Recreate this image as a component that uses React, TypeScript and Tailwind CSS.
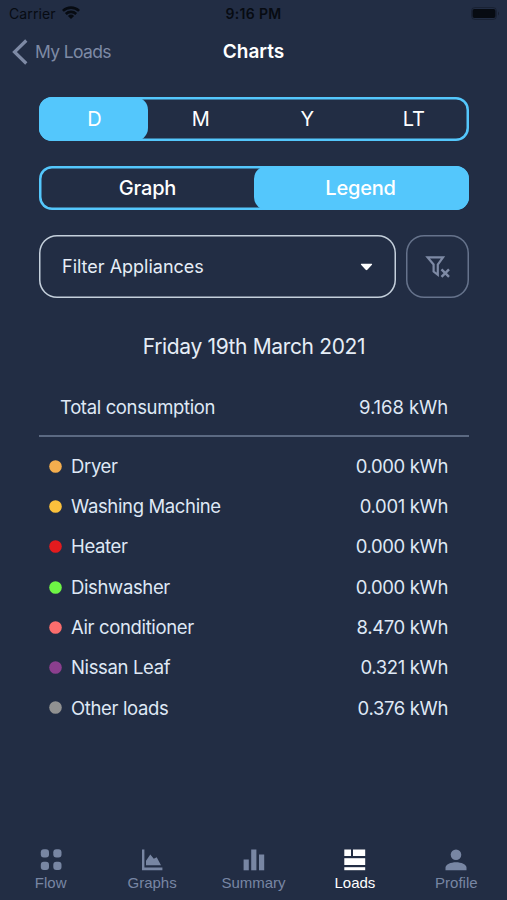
import type { ReactNode } from "react";
import clsx from "clsx";

interface Load {
  name: string;
  kwh: number;
  dot: string;
}

interface Tab {
  label: string;
  icon: ReactNode;
}

const loads: Load[] = [
  { name: "Dryer", kwh: 0, dot: "text-[#f4ae4e]" },
  { name: "Washing Machine", kwh: 0.001, dot: "text-[#fbc13c]" },
  { name: "Heater", kwh: 0, dot: "text-[#e31b1e]" },
  { name: "Dishwasher", kwh: 0, dot: "text-[#6ef545]" },
  { name: "Air conditioner", kwh: 8.47, dot: "text-[#fb6d6d]" },
  { name: "Nissan Leaf", kwh: 0.321, dot: "text-[#8b3f8e]" },
  { name: "Other loads", kwh: 0.376, dot: "text-[#919191]" },
];

const tabs: Tab[] = [
  {
    label: "Flow",
    icon: (
      <>
        <rect x="0.8" y="0.3" width="8.2" height="8.2" rx="3" />
        <rect x="13.3" y="0.3" width="8.2" height="8.2" rx="3" />
        <rect x="0.8" y="12.8" width="8.2" height="8.2" rx="3" />
        <rect x="13.3" y="12.8" width="8.2" height="8.2" rx="3" />
      </>
    ),
  },
  {
    label: "Graphs",
    icon: (
      <>
        <path d="M1 0.5h2.4v17.9H21.4v2.8H1z" />
        <path d="M5 16.2V11.8L9.3 5.6l3.5 4.2L15.7 8.2l4.3 8z" />
      </>
    ),
  },
  {
    label: "Summary",
    icon: (
      <>
        <rect x="0.6" y="10.5" width="5.2" height="10.8" />
        <rect x="8.2" y="0.5" width="5.2" height="20.8" />
        <rect x="16" y="5.5" width="5.2" height="15.8" />
      </>
    ),
  },
  {
    label: "Loads",
    icon: (
      <>
        <rect x="0.3" y="0.5" width="6.7" height="6.5" />
        <rect x="9" y="0.5" width="12.2" height="6.5" />
        <rect x="0.3" y="9.2" width="20.9" height="6.8" />
        <rect x="0.3" y="18.2" width="20.9" height="3" />
      </>
    ),
  },
  {
    label: "Profile",
    icon: (
      <>
        <circle cx="11" cy="5.7" r="5.3" />
        <path d="M0.5 21.2v-2.4c0-3.3 5.3-5.5 10.5-5.5s10.5 2.2 10.5 5.5v2.4z" />
      </>
    ),
  },
];

const fmt = (n: number) => `${n.toFixed(3)} kWh`;

function StatusBar() {
  return (
    <div className="grid h-[27px] grid-cols-3 items-center pl-[9px] pr-[6px] text-[14px] text-[#070b12]">
      <div className="flex items-center gap-[6px]">
        <span className="tracking-[0.1px]">Carrier</span>
        <svg className="mb-[2px] h-[13px] w-[18px]" viewBox="0 0 18 13" fill="none" stroke="currentColor" strokeWidth="2.6">
          <path d="M0.9 4.9a11.6 11.6 0 0 1 16.2 0" />
          <path d="M3.8 8a7.5 7.5 0 0 1 10.4 0" />
          <path d="M9 13L5.9 9.9a4.4 4.4 0 0 1 6.2 0z" fill="currentColor" stroke="none" />
        </svg>
      </div>
      <span className="pr-[3px] text-center font-semibold tracking-[0.3px]">9:16 PM</span>
      <svg className="h-[13px] w-[30px] justify-self-end" viewBox="0 0 30 13">
        <rect x="0.5" y="0.5" width="25" height="12" rx="3.5" fill="none" stroke="currentColor" opacity="0.3" />
        <rect x="1.5" y="2" width="23" height="9" rx="2" fill="currentColor" />
        <path d="M27 4.5q2 2 0 4z" fill="currentColor" opacity="0.4" />
      </svg>
    </div>
  );
}

function NavBar() {
  return (
    <header className="grid h-[49px] grid-cols-3 items-center px-3">
      <button className="flex items-center gap-[7px] text-[17.5px] tracking-[-0.65px] text-[#7e8aa5]">
        <svg className="h-[26px] w-[16px]" viewBox="0 0 16 26" fill="none" stroke="currentColor" strokeWidth="3.2">
          <path d="M14.3 1.5L2.5 13l11.8 11.5" />
        </svg>
        <span className="whitespace-nowrap pt-[2px]">My Loads</span>
      </button>
      <h1 className="pt-[2px] text-center text-[19px] font-semibold text-white">Charts</h1>
    </header>
  );
}

interface SegmentedProps {
  options: string[];
  selected: string;
  className?: string;
}

function Segmented({ options, selected, className }: SegmentedProps) {
  return (
    <div className={clsx("flex h-11 rounded-[13px] px-[2px] shadow-[inset_0_0_0_2.5px_#54c7fc]", className)}>
      {options.map((option) => (
        <button
          key={option}
          className={clsx(
            "flex-1 text-[20px] tracking-[-0.2px] text-white",
            options.length === 2 && "font-medium",
            option === selected && "rounded-[13px] bg-[#54c7fc]",
            option === selected && option === options[0] && "-ml-[2px] pl-[2px]",
            option === selected && option !== options[0] && "-mr-[2px] pr-[2px]",
          )}
        >
          {option}
        </button>
      ))}
    </div>
  );
}

function FilterBar() {
  return (
    <div className="mt-[25px] flex gap-[10px]">
      <button className="flex h-[63px] w-[357px] items-center justify-between rounded-[18px] px-[23px] text-[18px] text-[#e6edf7] shadow-[inset_0_0_0_1.5px_#c5d0dc]">
        Filter Appliances
        <svg className="h-[8px] w-[13px]" viewBox="0 0 14 8" fill="white">
          <path d="M1.5 0.6h11q1 0 0.4 0.9L7.9 7q-0.9 0.8-1.8 0L1.1 1.5q-0.6-0.9 0.4-0.9z" />
        </svg>
      </button>
      <button className="flex size-[63px] items-center justify-center rounded-[18px] text-[#7e8aa5] shadow-[inset_0_0_0_1.5px_#66738c]">
        <svg className="h-[24px] w-[26px]" viewBox="0 0 26 24" fill="none" stroke="currentColor" strokeWidth="2.2">
          <path d="M2.6 2.4h15.4L12.8 9.5v10.3L8.6 16.5v-7z" />
          <path d="M16.5 14.3l7.5 7.5M24 14.3L16.5 21.8" strokeWidth="2.4" />
        </svg>
      </button>
    </div>
  );
}

function LoadRow({ load }: { load: Load }) {
  return (
    <li className="flex h-[40.3px] items-center pl-[9.5px] pr-[21px]">
      <svg className={clsx("mr-[9.5px] size-[13px]", load.dot)} viewBox="0 0 13 13" fill="currentColor">
        <circle cx="6.5" cy="6.5" r="6.3" />
      </svg>
      <span className="flex-1 pt-px">{load.name}</span>
      <span className="pt-px">{fmt(load.kwh)}</span>
    </li>
  );
}

function TabBar() {
  return (
    <nav className="flex h-[54px] font-['Liberation_Sans',sans-serif]">
      {tabs.map((tab) => (
        <button
          key={tab.label}
          className={clsx(
            "flex flex-1 flex-col items-center gap-[3px] pt-[3px] text-[15px] leading-[18px]",
            tab.label === "Loads" ? "text-white" : "text-[#7886a3]",
          )}
        >
          <svg className="size-[22px]" viewBox="0 0 22 22" fill="currentColor">
            {tab.icon}
          </svg>
          {tab.label}
        </button>
      ))}
    </nav>
  );
}

export default function App() {
  return (
    <div className="flex h-[900px] w-[507px] flex-col bg-[#222d44] font-['Inter',sans-serif]">
      <StatusBar />
      <NavBar />
      <main className="flex flex-1 flex-col pl-[39px] pr-[38px]">
        <Segmented options={["D", "M", "Y", "LT"]} selected="D" className="mt-[21px]" />
        <Segmented options={["Graph", "Legend"]} selected="Legend" className="mt-[25px]" />
        <FilterBar />
        <h2 className="mt-[33px] text-center text-[21px] leading-8 tracking-[-0.36px] text-[#e6edf7]">
          Friday 19th March 2021
        </h2>
        <div className="text-[18.5px] tracking-[-0.36px] text-[#dfe8f5]">
          <div className="mt-[15px] flex h-[59px] items-center justify-between border-b-2 border-[#5b6982] px-[21px] pt-[2px]">
            <span>Total consumption</span>
            <span className="tracking-[-0.08px]">{fmt(9.168)}</span>
          </div>
          <ul className="mt-[9px]">
            {loads.map((load) => (
              <LoadRow key={load.name} load={load} />
            ))}
          </ul>
        </div>
      </main>
      <TabBar />
    </div>
  );
}
